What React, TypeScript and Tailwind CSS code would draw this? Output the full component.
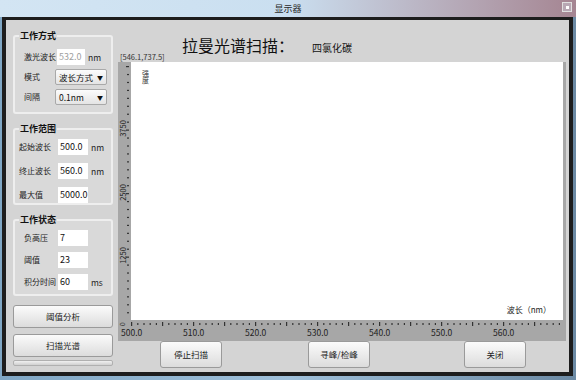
import React from 'react';

const font = { fontFamily: '"Noto Sans CJK SC", "Liberation Sans", sans-serif' };

function Field({ label, value, unit, muted, labelW = 'w-[38px]', inputW = 'w-[30px]' }: { label: string; value: string; unit?: string; muted?: boolean; labelW?: string; inputW?: string }) {
  return (
    <div className="flex items-center h-[16px]">
      <span className={`${labelW} text-[8px] text-[#222] whitespace-nowrap`}>{label}</span>
      <div className={`${inputW} h-[16px] bg-white flex items-center pl-[2px] text-[9px] ${muted ? 'text-[#a0a0a0]' : 'text-[#111]'}`}>{value}</div>
      {unit && <span className="ml-[3px] text-[8.5px] text-[#222]">{unit}</span>}
    </div>
  );
}

function Select({ label, value }: { label: string; value: string }) {
  return (
    <div className="flex items-center h-[16px]">
      <span className="w-[31px] text-[8px] text-[#222]">{label}</span>
      <div className="w-[52px] h-[16px] flex items-center justify-between px-[3px] text-[8.5px] text-[#111] bg-gradient-to-b from-[#fcfcfc] to-[#e4e4e4] border border-[#a9a9a9] rounded-[2px]">
        <span>{value}</span>
        <span className="text-[6px]">▼</span>
      </div>
    </div>
  );
}

function Group({ title, children, h, className = '' }: { title: string; children: React.ReactNode; h: string; className?: string }) {
  return (
    <fieldset className={`border-2 border-[#eeeeee] rounded-[3px] bg-[#d9d9d9] px-[4px] ${h} ${className}`}>
      <legend className="text-[9px] font-bold text-[#111] px-[1px] leading-[12px]">{title}</legend>
      {children}
    </fieldset>
  );
}

function Btn({ label, className = '' }: { label: string; className?: string }) {
  return (
    <div className={`flex items-center justify-center text-[8.5px] text-[#222] bg-gradient-to-b from-[#fbfbfb] to-[#dcdcdc] border border-[#9a9a9a] rounded-[3px] ${className}`}>
      {label}
    </div>
  );
}

export default function App() {
  const xLabels = ['500.0', '510.0', '520.0', '530.0', '540.0', '550.0', '560.0'];
  const xTicks = Array.from({ length: 70 }, (_, i) => i);
  const yTicks = Array.from({ length: 33 }, (_, i) => i);

  return (
    <div className="w-[576px] h-[380px] overflow-hidden bg-gradient-to-r from-[#7fa6c4] via-[#9fc0da] to-[#6c8aa4]" style={font}>
      {/* title bar */}
      <div className="relative h-[17px] flex items-center justify-center bg-gradient-to-r from-[#d3e5f3] via-[#cadff0] to-[#a58592]">
        <span className="text-[9px] text-[#2a2a2a]">显示器</span>
        <div className="absolute right-[4px] top-[2px] w-[10px] h-[10px] border border-[#e0e0e0] bg-[#b8a8b4] flex items-center justify-center">
          <div className="w-[3px] h-[3px] bg-white" />
        </div>
      </div>

      {/* window */}
      <div className="ml-[2px] mr-[3px] h-[359px] border-t-[3px] border-x-[4px] border-b-[4px] border-[#1d1d1d] bg-[#d4d4d4] flex">
        {/* left column */}
        <div className="w-[100px] ml-[7px] flex flex-col">
          <Group title="工作方式" h="h-[84px]" className="mt-[10px]">
            <div className="flex flex-col gap-[4px] pl-[5px] pt-[7px]">
              <Field label="激光波长" value="532.0" unit="nm" muted labelW="w-[33px]" inputW="w-[28px]" />
              <Select label="模式" value="波长方式" />
              <Select label="间隔" value="0.1nm" />
            </div>
          </Group>
          <Group title="工作范围" h="h-[82px]" className="mt-[9px]">
            <div className="flex flex-col gap-[8px] pt-[4px]">
              <Field label="起始波长" value="500.0" unit="nm" labelW="w-[39px]" />
              <Field label="终止波长" value="560.0" unit="nm" labelW="w-[39px]" />
              <Field label="最大值" value="5000.0" labelW="w-[39px]" />
            </div>
          </Group>
          <Group title="工作状态" h="h-[82px]" className="mt-[9px]">
            <div className="flex flex-col gap-[6px] pt-[4px] pl-[5px]">
              <Field label="负高压" value="7" labelW="w-[34px]" />
              <Field label="阈值" value="23" labelW="w-[34px]" />
              <Field label="积分时间" value="60" unit="ms" labelW="w-[34px]" />
            </div>
          </Group>
          <Btn label="阈值分析" className="mt-[9px] h-[23px]" />
          <Btn label="扫描光谱" className="mt-[6px] h-[23px]" />
          <div className="mt-[3px] h-[6px] rounded-[2px] border border-[#b0b0b0] bg-gradient-to-b from-[#f0f0f0] to-[#d0d0d0]" />
        </div>

        {/* chart column */}
        <div className="ml-[5px] w-[448px] flex flex-col">
          <div className="h-[42px] relative">
            <div className="flex items-end pl-[64px] pt-[15px]">
              <span className="text-[16px] leading-[21px] text-[#111]">拉曼光谱扫描：</span>
              <span className="ml-[18px] text-[10px] leading-[17px] text-[#111]">四氯化碳</span>
            </div>
            <span className="absolute left-[2px] bottom-[0px] text-[7.5px] leading-[10px] text-[#333]">[546.1,737.5]</span>
          </div>

          {/* chart */}
          <div className="h-[279px] bg-[#a7a7a7] flex flex-col">
            <div className="flex h-[258px]">
              <div className="w-[13px] relative">
                <svg className="absolute right-[2px] top-0" width="3" height="258">
                  {yTicks.map((i) => (
                    <rect key={i} x={i % 8 === 0 ? 0 : 1} y={4 + i * 7.94} width={i % 8 === 0 ? 3 : 2} height={1.2} fill="#333" />
                  ))}
                </svg>
                {[['3750', 66], ['2500', 130], ['1250', 193]].map(([t, y]) => (
                  <span key={t} className="absolute left-[-6px] w-[20px] text-center text-[7.5px] leading-[9px] text-[#222] -rotate-90" style={{ top: Number(y) - 4 }}>{t}</span>
                ))}
              </div>
              <div className="w-[432px] bg-white relative">
                <span className="absolute left-[11px] top-[8px] text-[7px] leading-[7px] text-[#333] w-[7px]">强度</span>
                <span className="absolute right-[12px] bottom-[4px] text-[8px] text-[#222]">波长（nm）</span>
              </div>
            </div>
            <div className="h-[21px] relative">
              <span className="absolute left-[2px] top-[-1px] text-[7px] text-[#222] -rotate-90">0</span>
              <svg className="absolute left-[13px] top-[2px]" width="432" height="5">
                {xTicks.map((i) => (
                  <rect key={i} x={i * 6.2} y={i % 5 === 0 ? 0 : 1} width={1.2} height={i % 5 === 0 ? 4 : 2} fill="#333" />
                ))}
              </svg>
              <div className="flex pl-[3px] pt-[7px]">
                {xLabels.map((l) => (
                  <span key={l} className="w-[62px] text-[8.5px] leading-[11px] text-[#222]">{l}</span>
                ))}
              </div>
            </div>
          </div>

          <div className="flex">
            <Btn label="停止扫描" className="ml-[42px] w-[62px] h-[27px]" />
            <Btn label="寻峰/检峰" className="ml-[86px] w-[62px] h-[27px]" />
            <Btn label="关闭" className="ml-[94px] w-[62px] h-[27px]" />
          </div>
        </div>
      </div>
    </div>
  );
}
